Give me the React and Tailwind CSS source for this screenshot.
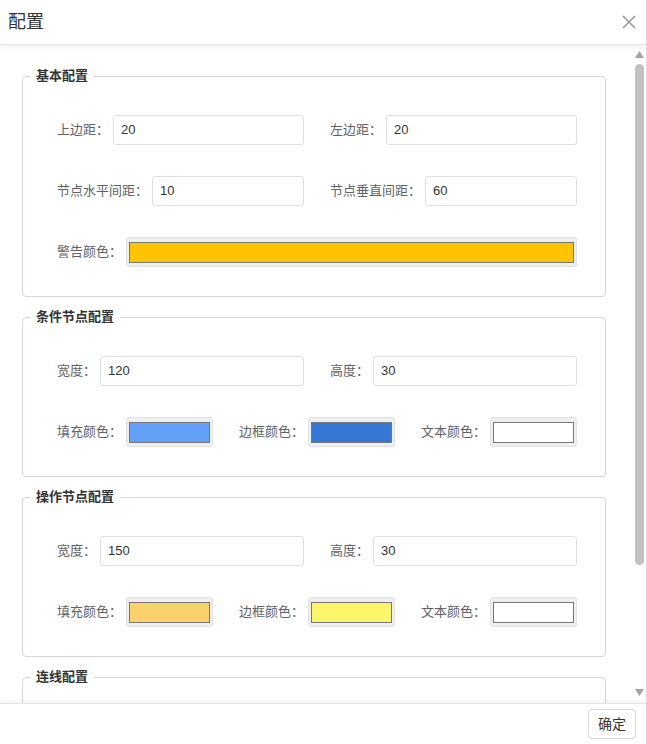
const font = { fontFamily: '"Liberation Sans", "Noto Sans CJK SC", sans-serif' };

function TextField({ label, value }) {
  return (
    <div className="flex items-center gap-[4px]">
      <span className="text-[13px] text-[#606266] whitespace-nowrap">{label}：</span>
      <div className="flex-1 h-[30px] border border-[#dcdfe6] rounded-[3px] flex items-center pl-[7px] text-[13px] text-[#333]">
        {value}
      </div>
    </div>
  );
}

function ColorField({ label, color }) {
  return (
    <div className="flex items-center gap-[4px]">
      <span className="text-[13px] text-[#606266] whitespace-nowrap">{label}：</span>
      <div className="flex-1 h-[30px] bg-[#efefef] border border-[#e2e2e2] rounded-[3px] flex items-center px-[2px]">
        <div className="w-full h-[21px] border border-[#767676]" style={{ background: color }} />
      </div>
    </div>
  );
}

function Group({ title, children }) {
  return (
    <fieldset className="border border-[#d3d6dc] rounded-[4px] px-0 pb-[29px]">
      <legend className="ml-[7px] px-[6px] text-[13px] leading-[18px] font-bold text-[#333]">{title}</legend>
      <div className="pt-[30px] pl-[34px] w-[554px] flex flex-col gap-[31px]">{children}</div>
    </fieldset>
  );
}

export default function App() {
  return (
    <div className="w-[647px] h-[744px] bg-white border-r border-[#d9d9d9] flex flex-col overflow-hidden" style={font}>
      <div className="h-[45px] shrink-0 border-b border-[#e5e5e5] shadow-[0_2px_6px_rgba(0,0,0,0.07)] relative z-10 flex items-center justify-between pl-[8px] pr-[10px]">
        <span className="text-[18px] text-[#333]">配置</span>
        <svg width="14" height="14" viewBox="0 0 14 14" stroke="#999" strokeWidth="1.6" fill="none">
          <path d="M1 1L13 13M13 1L1 13" />
        </svg>
      </div>

      <div className="flex-1 flex overflow-hidden">
        <div className="flex-1 overflow-hidden pt-[22px] pl-[22px] pr-[26px] flex flex-col gap-[11px]">
          <Group title="基本配置">
            <div className="grid grid-cols-2 gap-[26px]">
              <TextField label="上边距" value="20" />
              <TextField label="左边距" value="20" />
            </div>
            <div className="grid grid-cols-2 gap-[26px]">
              <TextField label="节点水平间距" value="10" />
              <TextField label="节点垂直间距" value="60" />
            </div>
            <ColorField label="警告颜色" color="#ffc300" />
          </Group>

          <Group title="条件节点配置">
            <div className="grid grid-cols-2 gap-[26px]">
              <TextField label="宽度" value="120" />
              <TextField label="高度" value="30" />
            </div>
            <div className="grid grid-cols-3 gap-[26px]">
              <ColorField label="填充颜色" color="#62a1f7" />
              <ColorField label="边框颜色" color="#3678d6" />
              <ColorField label="文本颜色" color="#ffffff" />
            </div>
          </Group>

          <Group title="操作节点配置">
            <div className="grid grid-cols-2 gap-[26px]">
              <TextField label="宽度" value="150" />
              <TextField label="高度" value="30" />
            </div>
            <div className="grid grid-cols-3 gap-[26px]">
              <ColorField label="填充颜色" color="#fbd26a" />
              <ColorField label="边框颜色" color="#fbf56a" />
              <ColorField label="文本颜色" color="#ffffff" />
            </div>
          </Group>

          <Group title="连线配置">
            <div className="h-[100px]" />
          </Group>
        </div>

        <div className="w-[14px] shrink-0 flex flex-col items-center pt-[6px] pb-[7px]">
          <svg width="9" height="7" viewBox="0 0 9 7"><path d="M4.5 0L9 7H0Z" fill="#a3a3a3" /></svg>
          <div className="w-[9px] h-[501px] mt-[6px] rounded-full bg-[#c1c1c1]" />
          <div className="flex-1" />
          <svg width="9" height="7" viewBox="0 0 9 7"><path d="M0 0H9L4.5 7Z" fill="#a3a3a3" /></svg>
        </div>
      </div>

      <div className="h-[41px] shrink-0 border-t border-[#e4e4e4] shadow-[0_-2px_6px_rgba(0,0,0,0.05)] relative z-10 flex items-center justify-end pr-[10px]">
        <button className="h-[30px] w-[48px] border border-[#d9d9d9] rounded-[3px] bg-white text-[14px] text-[#333]">确定</button>
      </div>
    </div>
  );
}
